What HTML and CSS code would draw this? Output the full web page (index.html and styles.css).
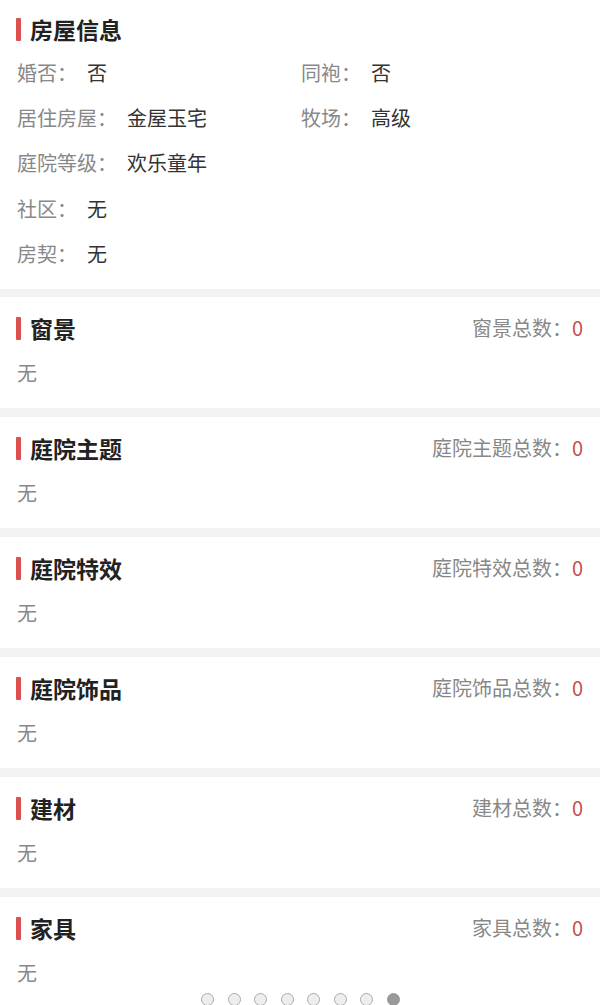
FILE: index.html
```html
<!DOCTYPE html>
<html lang="zh-CN">
<head>
<meta charset="utf-8">
<title>房屋信息</title>
<link rel="stylesheet" href="styles.css">
</head>
<body>
<section class="card card-info">
  <div class="head"><h2 class="title">房屋信息</h2></div>
  <div class="grid">
    <div class="field"><span class="label">婚否：</span><span class="value">否</span></div>
    <div class="field"><span class="label">同袍：</span><span class="value">否</span></div>
    <div class="field"><span class="label">居住房屋：</span><span class="value">金屋玉宅</span></div>
    <div class="field"><span class="label">牧场：</span><span class="value">高级</span></div>
    <div class="field full"><span class="label">庭院等级：</span><span class="value">欢乐童年</span></div>
    <div class="field full"><span class="label">社区：</span><span class="value">无</span></div>
    <div class="field full"><span class="label">房契：</span><span class="value">无</span></div>
  </div>
</section>
<section class="card">
  <div class="head"><h2 class="title">窗景</h2><div class="count">窗景总数：<span class="num">0</span></div></div>
  <div class="empty">无</div>
</section>
<section class="card">
  <div class="head"><h2 class="title">庭院主题</h2><div class="count">庭院主题总数：<span class="num">0</span></div></div>
  <div class="empty">无</div>
</section>
<section class="card">
  <div class="head"><h2 class="title">庭院特效</h2><div class="count">庭院特效总数：<span class="num">0</span></div></div>
  <div class="empty">无</div>
</section>
<section class="card">
  <div class="head"><h2 class="title">庭院饰品</h2><div class="count">庭院饰品总数：<span class="num">0</span></div></div>
  <div class="empty">无</div>
</section>
<section class="card">
  <div class="head"><h2 class="title">建材</h2><div class="count">建材总数：<span class="num">0</span></div></div>
  <div class="empty">无</div>
</section>
<section class="card">
  <div class="head"><h2 class="title">家具</h2><div class="count">家具总数：<span class="num">0</span></div></div>
  <div class="empty">无</div>
</section>
<div class="dots">
  <span class="dot"></span><span class="dot"></span><span class="dot"></span><span class="dot"></span>
  <span class="dot"></span><span class="dot"></span><span class="dot"></span><span class="dot active"></span>
</div>
</body>
</html>
```

FILE: styles.css
```css
html, body {
  margin: 0;
  padding: 0;
}
body {
  background: #f3f3f3;
  font-family: "Noto Sans CJK SC", "Noto Sans", sans-serif;
  color: #333;
}
.card {
  background: #fff;
  padding: 15px 17px 13px 16px;
  margin-bottom: 9px;
  height: 83px;
}
.card-info {
  padding-top: 13px;
  padding-bottom: 0;
  height: 276px;
  margin-bottom: 8px;
}
.head {
  display: flex;
  align-items: center;
  justify-content: space-between;
  height: 32px;
}
.title {
  margin: 0;
  font-size: 23px;
  font-weight: 700;
  color: #222;
  display: flex;
  align-items: center;
  line-height: 32px;
}
.title::before {
  content: "";
  width: 5px;
  height: 23px;
  background: #dc5050;
  margin-right: 9px;
  border-radius: 1px;
}
.count {
  font-size: 20px;
  color: #888;
  line-height: 32px;
}
.num {
  color: #c4504a;
}
.grid {
  display: grid;
  grid-template-columns: 284px 1fr;
  margin-top: 5px;
  padding-left: 1px;
}
.field {
  display: flex;
  align-items: center;
  height: 45.2px;
  font-size: 20px;
}
.field.full {
  grid-column: 1 / -1;
}
.label {
  color: #888;
  margin-right: 10px;
}
.value {
  color: #333;
}
.empty {
  margin-top: 6px;
  padding-left: 1px;
  height: 45px;
  line-height: 45px;
  font-size: 20px;
  color: #888;
}
.dots {
  position: fixed;
  left: 0;
  right: 0;
  bottom: -1px;
  display: flex;
  justify-content: center;
  gap: 13.6px;
  padding-left: 1px;
}
.dot {
  width: 13px;
  height: 13px;
  box-sizing: border-box;
  border-radius: 50%;
  border: 1.5px solid #aaa;
  background: #eee;
}
.dot.active {
  background: #999;
  border-color: #999;
}
```
